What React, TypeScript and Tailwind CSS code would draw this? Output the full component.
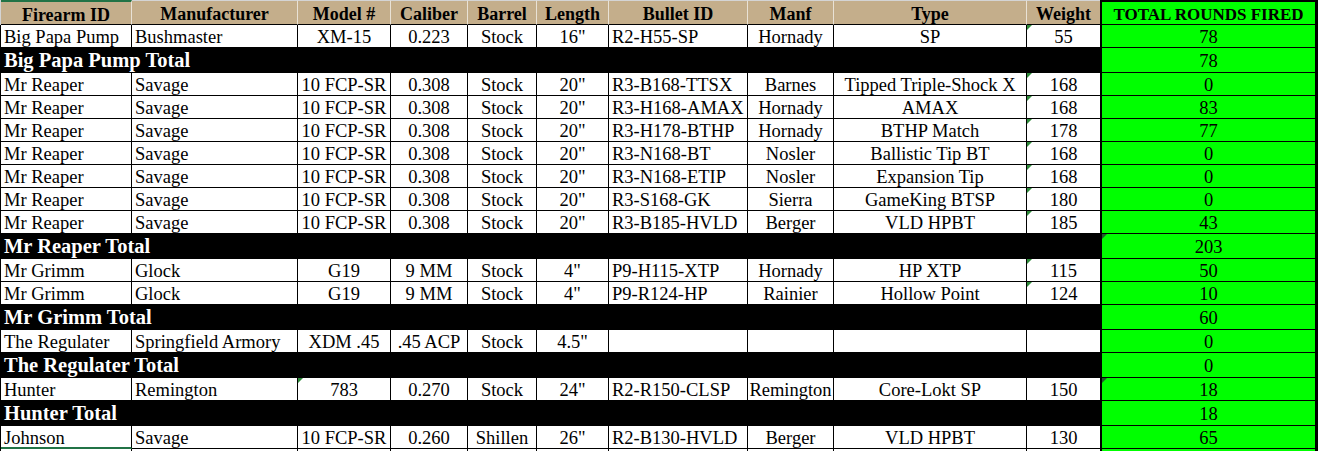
import React from 'react'

type DataRow = {
  kind: 'data'
  id: string
  mfr: string
  model: string
  cal: string
  barrel: string
  len: string
  bullet: string
  manf: string
  btype: string
  wt: string
  total: string
  triWt?: boolean
  triModel?: boolean
  triTotal?: boolean
  selected?: boolean
}
type TotalRow = { kind: 'total'; label: string; total: string; triTotal?: boolean }
type Row = DataRow | TotalRow

const reaper = (bullet: string, manf: string, btype: string, wt: string, total: string): DataRow => ({
  kind: 'data', id: 'Mr Reaper', mfr: 'Savage', model: '10 FCP-SR', cal: '0.308', barrel: 'Stock', len: '20"',
  bullet, manf, btype, wt, total, triWt: true,
})
const grimm = (bullet: string, manf: string, btype: string, wt: string, total: string): DataRow => ({
  kind: 'data', id: 'Mr Grimm', mfr: 'Glock', model: 'G19', cal: '9 MM', barrel: 'Stock', len: '4"',
  bullet, manf, btype, wt, total, triWt: true,
})

const ROWS: Row[] = [
  { kind: 'data', id: 'Big Papa Pump', mfr: 'Bushmaster', model: 'XM-15', cal: '0.223', barrel: 'Stock', len: '16"', bullet: 'R2-H55-SP', manf: 'Hornady', btype: 'SP', wt: '55', total: '78', triWt: true },
  { kind: 'total', label: 'Big Papa Pump Total', total: '78' },
  reaper('R3-B168-TTSX', 'Barnes', 'Tipped Triple-Shock X', '168', '0'),
  reaper('R3-H168-AMAX', 'Hornady', 'AMAX', '168', '83'),
  reaper('R3-H178-BTHP', 'Hornady', 'BTHP Match', '178', '77'),
  reaper('R3-N168-BT', 'Nosler', 'Ballistic Tip BT', '168', '0'),
  reaper('R3-N168-ETIP', 'Nosler', 'Expansion Tip', '168', '0'),
  reaper('R3-S168-GK', 'Sierra', 'GameKing BTSP', '180', '0'),
  reaper('R3-B185-HVLD', 'Berger', 'VLD HPBT', '185', '43'),
  { kind: 'total', label: 'Mr Reaper Total', total: '203', triTotal: true },
  grimm('P9-H115-XTP', 'Hornady', 'HP XTP', '115', '50'),
  grimm('P9-R124-HP', 'Rainier', 'Hollow Point', '124', '10'),
  { kind: 'total', label: 'Mr Grimm Total', total: '60' },
  { kind: 'data', id: 'The Regulater', mfr: 'Springfield Armory', model: 'XDM .45', cal: '.45 ACP', barrel: 'Stock', len: '4.5"', bullet: '', manf: '', btype: '', wt: '', total: '0' },
  { kind: 'total', label: 'The Regulater Total', total: '0' },
  { kind: 'data', id: 'Hunter', mfr: 'Remington', model: '783', cal: '0.270', barrel: 'Stock', len: '24"', bullet: 'R2-R150-CLSP', manf: 'Remington', btype: 'Core-Lokt SP', wt: '150', total: '18', triModel: true, triTotal: true },
  { kind: 'total', label: 'Hunter Total', total: '18' },
  { kind: 'data', id: 'Johnson', mfr: 'Savage', model: '10 FCP-SR', cal: '0.260', barrel: 'Shillen', len: '26"', bullet: 'R2-B130-HVLD', manf: 'Berger', btype: 'VLD HPBT', wt: '130', total: '65', selected: true },
  { kind: 'data', id: '', mfr: '', model: '', cal: '', barrel: '', len: '', bullet: '', manf: '', btype: '', wt: '', total: '' },
]

const HEADERS = ['Firearm ID', 'Manufacturer', 'Model #', 'Caliber', 'Barrel', 'Length', 'Bullet ID', 'Manf', 'Type', 'Weight']
const WIDTHS = ['w-[131px]', 'w-[166px]', 'w-[93px]', 'w-[77px]', 'w-[69px]', 'w-[72px]', 'w-[139px]', 'w-[86px]', 'w-[193px]', 'w-[73px]']
const LEFT = [true, true, false, false, false, false, true, false, false, false]

// excel's little green error marker in the corner of a cell
function Tri({ dark }: { dark?: boolean }) {
  return (
    <span className={`absolute left-0 top-0 w-0 h-0 border-t-[5px] border-r-[5px] border-r-transparent ${dark ? 'border-t-[#1f5f2a]' : 'border-t-[#2e8b3a]'}`} />
  )
}

function GreenCell({ children, header, tri, className = '' }: { children?: React.ReactNode; header?: boolean; tri?: boolean; className?: string }) {
  return (
    <div className={`relative w-[218px] shrink-0 bg-[#00ff00] border-l-2 border-r-[3px] border-black flex items-center justify-center ${header ? 'border-t-2 font-bold text-[17px] border-b' : 'border-b'} ${className}`}>
      {tri && <Tri dark />}
      {children}
    </div>
  )
}

export default function App() {
  return (
    <div className="w-[1319px] h-[451px] overflow-hidden bg-white text-black font-['Liberation_Serif',serif]">
      {/* header */}
      <div className="flex h-[25px]">
        <div className="flex border-l border-[#d4d4d4]">
          {HEADERS.map((h, i) => (
            <div key={h}
              className={`${WIDTHS[i]} shrink-0 bg-[#c4ae8b] border-b border-b-black flex items-center justify-center pt-[3px] font-bold text-[18px] leading-none
                ${i < 9 ? 'border-r border-r-[#e9e2d6]' : ''} ${i === 0 ? 'border-t-2 border-t-[#217346]' : 'border-t border-t-[#d4d4d4]'}`}>
              {h}
            </div>
          ))}
        </div>
        <GreenCell header className="pt-[3px] leading-none">TOTAL ROUNDS FIRED</GreenCell>
      </div>

      {ROWS.map((r, ri) => {
        if (r.kind === 'total') {
          return (
            <div key={ri} className="flex h-[25px]">
              <div className="w-[1100px] shrink-0 bg-black text-white font-bold text-[20.5px] leading-[24px] pl-[4px] border-b border-black">
                {r.label}
              </div>
              <GreenCell tri={r.triTotal} className="text-[18.5px] leading-[24px] pt-[1px]">{r.total}</GreenCell>
            </div>
          )
        }
        const vals = [r.id, r.mfr, r.model, r.cal, r.barrel, r.len, r.bullet, r.manf, r.btype, r.wt]
        return (
          <div key={ri} className="flex h-[23px]">
            <div className="flex border-l border-black">
              {vals.map((v, i) => (
                <div key={i}
                  className={`relative ${WIDTHS[i]} shrink-0 text-[18.5px] leading-[22px] pt-[1px] whitespace-nowrap overflow-hidden
                    ${LEFT[i] ? 'text-left pl-[3px]' : 'text-center'} ${i < 9 ? 'border-r border-black' : ''}
                    ${i === 0 && r.selected ? 'border-b-2 border-b-[#217346]' : 'border-b border-b-black'}`}>
                  {((i === 9 && r.triWt) || (i === 2 && r.triModel)) && <Tri />}
                  {v}
                </div>
              ))}
            </div>
            <GreenCell tri={r.triTotal} className="text-[18.5px] leading-[22px] pt-[1px]">{r.total}</GreenCell>
          </div>
        )
      })}
    </div>
  )
}
